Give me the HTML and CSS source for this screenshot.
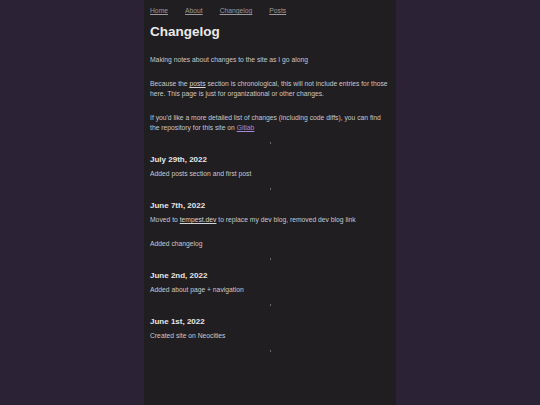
FILE: index.html
```
<!DOCTYPE html>
<html>
<head>
<meta charset="utf-8">
<link rel="stylesheet" href="styles.css">
</head>
<body>
<div class="page">
  <nav class="nav">
    <a href="#">Home</a>
    <a href="#">About</a>
    <a href="#">Changelog</a>
    <a href="#">Posts</a>
  </nav>
  <h1 class="title">Changelog</h1>
  <p class="lead">Making notes about changes to the site as I go along</p>
  <p>Because the <a class="ln" href="#">posts</a> section is chronological, this will not include entries for those here. This page is just for organizational or other changes.</p>
  <p>If you'd like a more detailed list of changes (including code diffs), you can find the repository for this site on <a class="visited" href="#">Gitlab</a></p>
  <div class="sep"></div>
  <h2>July 29th, 2022</h2>
  <p class="entry">Added posts section and first post</p>
  <div class="sep"></div>
  <h2>June 7th, 2022</h2>
  <p class="entry">Moved to <a class="ln" href="#">tempest.dev</a> to replace my dev blog, removed dev blog link</p>
  <p>Added changelog</p>
  <div class="sep"></div>
  <h2>June 2nd, 2022</h2>
  <p class="entry">Added about page + navigation</p>
  <div class="sep"></div>
  <h2>June 1st, 2022</h2>
  <p class="entry">Created site on Neocities</p>
  <div class="sep"></div>
</div>
</body>
</html>
```
FILE: styles.css
```
html, body {
  margin: 0;
  padding: 0;
  background: #2b2235;
}
body {
  font-family: "Liberation Sans", Arial, sans-serif;
  font-size: 6.75px;
  line-height: 10px;
  color: #c9c7ca;
}
.page {
  width: 252px;
  min-height: 100vh;
  margin: 0 auto;
  padding: 6px 6px 0;
  box-sizing: border-box;
  background: #201e21;
}
.nav {
  display: flex;
  gap: 17px;
}
.nav a {
  color: #9b999c;
  text-decoration: underline;
}
.title {
  margin: 8px 0 0;
  font-size: 13.5px;
  line-height: 16px;
  font-weight: bold;
  color: #ebeaeb;
}
p {
  margin: 14px 0 0;
}
.lead {
  margin-top: 15px;
}
.ln {
  color: #d6d4d7;
  text-decoration: underline;
}
.visited {
  color: #a58ad6;
  text-decoration: underline;
}
.sep {
  width: 1px;
  height: 2px;
  background: #6a686b;
  margin: 9px auto 11px;
}
h2 {
  margin: 0;
  font-size: 8px;
  line-height: 10px;
  font-weight: bold;
  color: #e6e5e6;
}
.entry {
  margin-top: 4px;
}
```
